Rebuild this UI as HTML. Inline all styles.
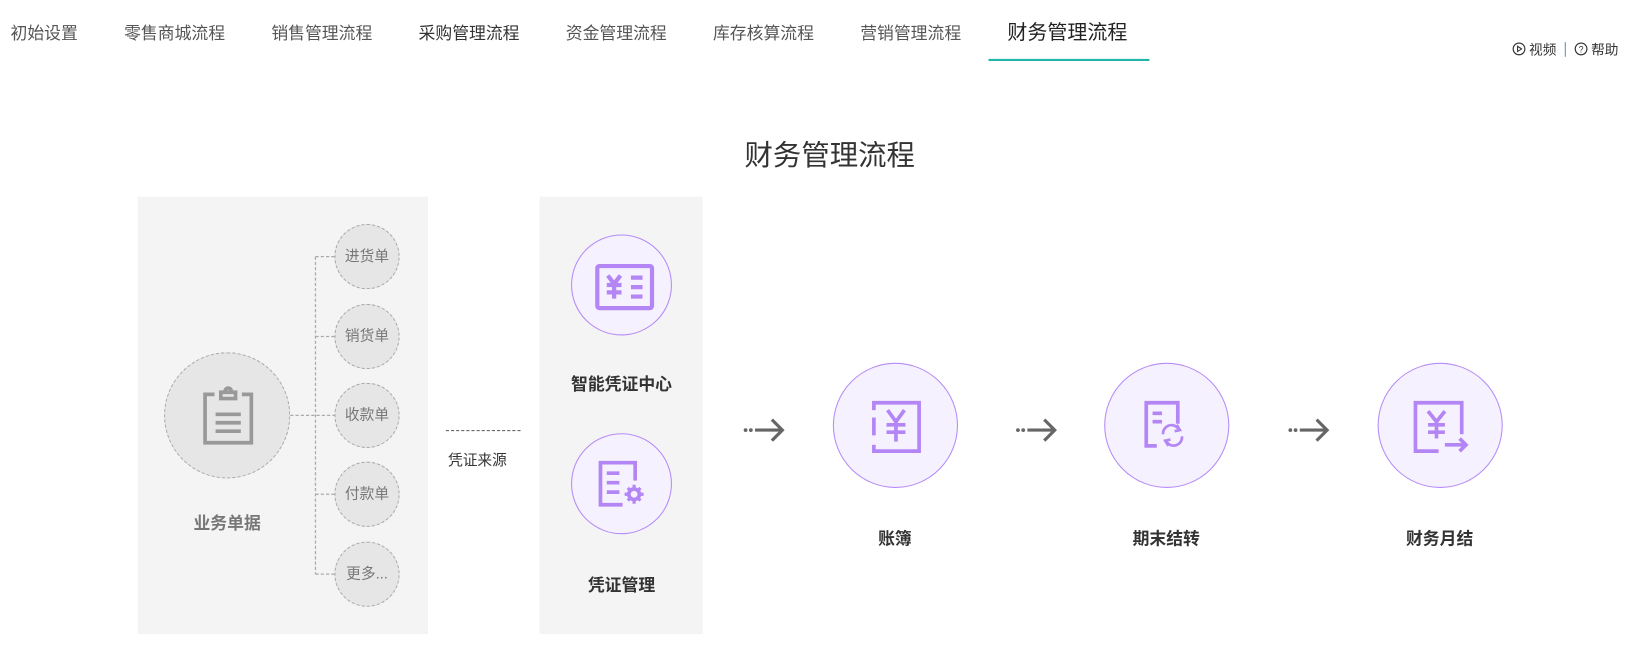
<!DOCTYPE html>
<html><head><meta charset="utf-8"><style>
*{margin:0;padding:0;box-sizing:border-box}
body{width:1649px;height:649px;background:#fff;position:relative;overflow:hidden;font-family:"Liberation Sans","Noto Sans CJK SC",sans-serif;color:#333}
#w{position:absolute;left:0;top:0;width:1568px;height:617px;transform:scale(1.0516);transform-origin:0 0}
.a{position:absolute;white-space:nowrap}
.tab{top:22px;font-size:16px;color:#555;line-height:22px}
.c{position:absolute;border-radius:50%}
.sm{width:62px;height:62px;border:1.5px dashed #aaa;background:#e6e6e6;left:318px;font-size:14px;color:#777;text-align:center;line-height:59px}
.pc{border:1px solid #b58cf7;background:#f5f1fe}
.lb{font-size:16px;font-weight:bold;color:#333;transform:translateX(-50%)}
</style></head><body><div id="w">
<div class="a tab" style="left:10px">初始设置</div>
<div class="a tab" style="left:118px">零售商城流程</div>
<div class="a tab" style="left:258px">销售管理流程</div>
<div class="a tab" style="left:398px;color:#333">采购管理流程</div>
<div class="a tab" style="left:538px">资金管理流程</div>
<div class="a tab" style="left:678px">库存核算流程</div>
<div class="a tab" style="left:818px">营销管理流程</div>
<div class="a tab" style="left:958px;font-size:19px;color:#222;top:21px">财务管理流程</div>
<div class="a" style="left:940px;top:56px;width:153px;height:2px;background:#1fb5a8"></div>

<div class="a" style="left:1438px;top:37px;font-size:13px;color:#333;display:flex;align-items:center;gap:3px">
<svg width="13" height="13" viewBox="0 0 14 14"><circle cx="7" cy="7" r="6" fill="none" stroke="#333" stroke-width="1.2"/><path d="M5.5 4.3v5.4L9.6 7z" fill="none" stroke="#333" stroke-width="1.1"/></svg>视频<span style="display:inline-block;width:1px;height:14px;background:#5b8fd0;margin:0 5px"></span><svg width="13" height="13" viewBox="0 0 14 14"><circle cx="7" cy="7" r="6" fill="none" stroke="#333" stroke-width="1.2"/><text x="7" y="10.5" font-size="9" text-anchor="middle" fill="#333" font-family="Liberation Sans">?</text></svg>帮助</div>

<div class="a" style="left:789px;top:126px;font-size:27px;color:#333;transform:translateX(-50%)">财务管理流程</div>

<div class="a" style="left:131px;top:187px;width:276px;height:416px;background:#f4f4f4"></div>
<div class="a" style="left:513px;top:187px;width:155px;height:416px;background:#f4f4f4"></div>

<svg class="a" style="left:0;top:0" width="420" height="620">
<g stroke="#aaa" stroke-width="1.2" stroke-dasharray="3,2" fill="none">
<path d="M276 395H318M300 244V546M300 244H318M300 320H318M300 470H318M300 546H318"/>
</g></svg>
<div class="c" style="left:156px;top:335px;width:120px;height:120px;border:1.5px dashed #aaa;background:#e6e6e6"></div>
<svg class="a" style="left:190px;top:367px" width="54" height="58" viewBox="0 0 54 58"><g fill="none" stroke="#999" stroke-width="3.5"><path d="M14 8H5v46h44V8h-9"/><path d="M20 6h14v6H20zM24 5a3 3 0 0 1 6 0"/><path d="M15 27h24M15 35h24M15 43h24"/></g></svg>
<div class="c sm" style="top:213px">进货单</div>
<div class="c sm" style="top:289px">销货单</div>
<div class="c sm" style="top:364px">收款单</div>
<div class="c sm" style="top:439px">付款单</div>
<div class="c sm" style="top:515px">更多...</div>
<div class="a lb" style="left:216px;top:484px;color:#777">业务单据</div>

<div class="a" style="left:424px;top:409px;width:71px;border-top:1px dashed #555"></div>
<div class="a" style="left:426px;top:427px;font-size:14px;color:#333">凭证来源</div>

<div class="c pc" style="left:543px;top:223px;width:96px;height:96px"></div>
<svg class="a" style="left:565px;top:250px" width="58" height="46" viewBox="0 0 58 46"><g fill="none" stroke="#b385f5" stroke-width="4"><rect x="3" y="3" width="52" height="40" rx="2"/><path d="M13 12l6 8 6-8M19 20v14M12 21h14M12 28h14M35 14h11M35 23h11M35 32h11"/></g></svg>
<div class="a lb" style="left:591px;top:352px">智能凭证中心</div>
<div class="c pc" style="left:543px;top:412px;width:96px;height:96px"></div>
<svg class="a" style="left:568px;top:437px" width="48" height="48" viewBox="0 0 48 48"><g fill="none" stroke="#b385f5" stroke-width="3.5"><path d="M24 43H3V3h33v17"/><path d="M9 13h12M9 22h12M9 31h12"/><circle cx="35" cy="33" r="5"/></g><g stroke="#b385f5" stroke-width="3"><path d="M35 24v4M35 38v4M26 33h4M40 33h4M29 27l3 3M38 36l3 3M29 39l3-3M38 30l3-3"/></g></svg>
<div class="a lb" style="left:591px;top:543px">凭证管理</div>

<svg class="a" style="left:705px;top:395px" width="42" height="28"><circle cx="4" cy="14" r="1.8" fill="#666"/><circle cx="9" cy="14" r="1.8" fill="#666"/><path d="M13 14h25M29 4l10 10-10 10" stroke="#666" stroke-width="3" fill="none"/></svg>
<svg class="a" style="left:964px;top:395px" width="42" height="28"><circle cx="4" cy="14" r="1.8" fill="#666"/><circle cx="9" cy="14" r="1.8" fill="#666"/><path d="M13 14h25M29 4l10 10-10 10" stroke="#666" stroke-width="3" fill="none"/></svg>
<svg class="a" style="left:1223px;top:395px" width="42" height="28"><circle cx="4" cy="14" r="1.8" fill="#666"/><circle cx="9" cy="14" r="1.8" fill="#666"/><path d="M13 14h25M29 4l10 10-10 10" stroke="#666" stroke-width="3" fill="none"/></svg>

<div class="c pc" style="left:792px;top:345px;width:119px;height:119px"></div>
<svg class="a" style="left:826px;top:380px" width="52" height="52" viewBox="0 0 52 52"><g fill="none" stroke="#b385f5" stroke-width="3.5"><path d="M5 10V3h43v46H5v-6"/><path d="M5 17v17"/><path d="M18 10l8 11 8-11M26 21v19M17 24h18M17 31h18"/></g></svg>
<div class="a lb" style="left:851px;top:499px">账簿</div>

<div class="c pc" style="left:1050px;top:345px;width:119px;height:119px"></div>
<svg class="a" style="left:1086px;top:380px" width="50" height="52" viewBox="0 0 50 52"><g fill="none" stroke="#b385f5" stroke-width="3.5"><path d="M14 44H4V3h30v20"/><path d="M10 13h9M10 21h9"/></g><g fill="none" stroke="#b385f5" stroke-width="2.5"><path d="M20 33a8 8 0 0 1 14-6l2 2M38 35a8 8 0 0 1-14 6l-2-2M33 24l3 5-5 1M25 44l-3-5 5-1"/></g></svg>
<div class="a lb" style="left:1109px;top:499px">期末结转</div>

<div class="c pc" style="left:1310px;top:345px;width:119px;height:119px"></div>
<svg class="a" style="left:1342px;top:380px" width="58" height="52" viewBox="0 0 58 52"><g fill="none" stroke="#b385f5" stroke-width="3.5"><path d="M26 49H4V3h44v30"/><path d="M16 11l8 10 8-10M24 21v16M16 24h16M16 31h16"/><path d="M32 43h20M46 37l6 6-6 6"/></g></svg>
<div class="a lb" style="left:1369px;top:499px">财务月结</div>
</div></body></html>
